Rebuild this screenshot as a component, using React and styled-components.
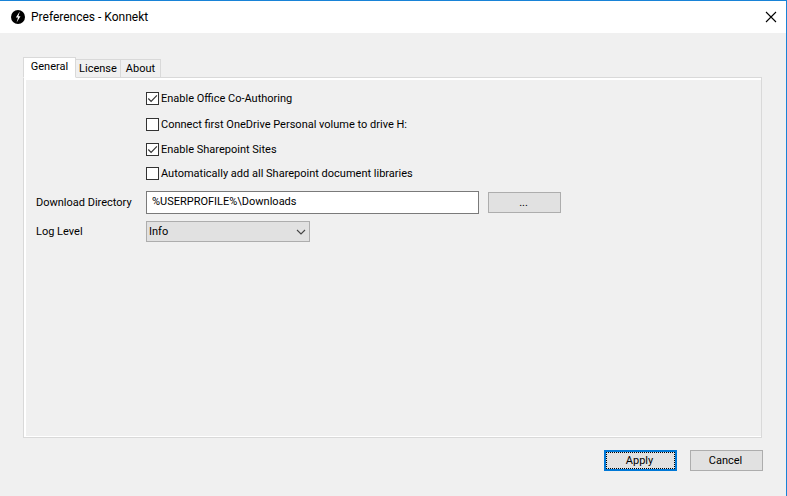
import React, { useState } from "react";
import styled, { createGlobalStyle } from "styled-components";

const GlobalStyle = createGlobalStyle`
  *, *::before, *::after { box-sizing: border-box; }
  body {
    margin: 0;
    background: #f0f0f0;
    color: #000;
    font: 11px/14px Roboto, sans-serif;
  }
  button, input, select { font: inherit; color: inherit; margin: 0; border-radius: 0; }
`;

const Window = styled.main`
  display: flex;
  flex-direction: column;
  min-height: 100vh;
  background: #f0f0f0;
  border-top: 1px solid #1883d7;
  border-right: 1px solid #1883d7;
`;

const TitleBar = styled.header`
  display: flex;
  align-items: center;
  gap: 6px;
  height: 32px;
  padding: 0 9px 0 11px;
  background: #fff;
`;

const Title = styled.h1`
  flex: 1;
  margin: 0;
  font: 12px/16px Roboto, sans-serif;
`;

const CloseButton = styled.button`
  display: flex;
  padding: 0;
  border: 0;
  background: none;
`;

const Content = styled.div`
  display: flex;
  flex: 1;
  flex-direction: column;
  padding: 24px 24px 0 23px;
`;

const TabList = styled.div`
  display: flex;
  align-items: flex-end;
  position: relative;
  margin-bottom: -1px;
`;

const Tab = styled.button`
  height: ${(p) => (p.$active ? 21 : 19)}px;
  padding: ${(p) => (p.$active ? "0 0 2px" : "1px 0 0")};
  border: 1px solid #d9d9d9;
  border-left-width: ${(p) => (p.$active ? 1 : 0)}px;
  border-bottom-color: ${(p) => (p.$active ? "#fff" : "#d9d9d9")};
  background: ${(p) => (p.$active ? "#fff" : "#f0f0f0")};
  width: ${(p) => p.$width}px;
`;

const Panel = styled.section`
  flex: 1;
  border: 1px solid #d9d9d9;
  background: #f0f0f0;
  box-shadow: inset 2px 2px #fff, inset 0 -1px #fff;
  padding: 8px 12px;
`;

const Form = styled.div`
  display: grid;
  grid-template-columns: 110px minmax(0, 1fr);
  grid-template-rows: 25px 27px 23px 25px 33px 25px;
  align-items: center;
`;

const CheckLabel = styled.label`
  display: flex;
  grid-column: 2;
  align-items: center;
  gap: 2px;
  white-space: nowrap;
`;

const CheckFrame = styled.span`
  display: grid;
  flex: none;
  width: 13px;
  height: 13px;

  > * { grid-area: 1 / 1; }
  svg { pointer-events: none; visibility: hidden; }
  input:checked + svg { visibility: visible; }
`;

const CheckInput = styled.input`
  appearance: none;
  width: 13px;
  height: 13px;
  border: 1px solid #333;
  background: #fff;
`;

const FieldLabel = styled.label`
  white-space: nowrap;
`;

const PathRow = styled.div`
  display: flex;
  align-items: center;
  gap: 9px;
`;

const PathInput = styled.input`
  flex: 0 1 333px;
  min-width: 0;
  height: 23px;
  padding: 0 5px 3px;
  border: 1px solid #7a7a7a;
  background: #fff;
  outline: 0;
`;

const SelectFrame = styled.div`
  display: grid;
  align-items: center;
  width: 164px;

  > * { grid-area: 1 / 1; }
  svg { justify-self: end; margin-right: 4px; pointer-events: none; }
`;

const Select = styled.select`
  appearance: none;
  width: 100%;
  height: 21px;
  padding: 0 2px;
  border: 1px solid #adadad;
  background: #e1e1e1;
`;

const Button = styled.button`
  flex: none;
  width: 73px;
  height: 21px;
  padding: 0 2px 0 0;
  border: ${(p) => (p.$default ? "2px solid #0078d7" : "1px solid #adadad")};
  background: #e1e1e1;
  outline: ${(p) => (p.$default ? "1px dotted #000" : "none")};
  outline-offset: -3px;
`;

const Footer = styled.footer`
  display: flex;
  justify-content: flex-end;
  gap: 13px;
  padding: 12px 23px 25px;
`;

function AppIcon() {
  return (
    <svg width="14" height="14" viewBox="0 0 14 14" aria-hidden="true">
      <circle cx="7" cy="7" r="7" fill="#000" />
      <path d="M8.8 1.6 4.8 7.4H7L5.6 12.4 9.5 6.2H7.4Z" fill="#fff" />
    </svg>
  );
}

function CheckOption({ label, defaultChecked }) {
  return (
    <CheckLabel>
      <CheckFrame>
        <CheckInput type="checkbox" defaultChecked={defaultChecked} />
        <svg width="13" height="13" viewBox="0 0 13 13" aria-hidden="true">
          <path d="M2.3 6.5 5.1 9.3 10.9 3.4" fill="none" stroke="#333" strokeWidth="1.2" />
        </svg>
      </CheckFrame>
      {label}
    </CheckLabel>
  );
}

const tabs = [
  { name: "General", width: 53 },
  { name: "License", width: 45 },
  { name: "About", width: 40 },
];

export default function App() {
  const [active, setActive] = useState("General");
  return (
    <>
      <GlobalStyle />
      <Window>
        <TitleBar>
          <AppIcon />
          <Title>Preferences - Konnekt</Title>
          <CloseButton type="button" aria-label="Close">
            <svg width="12" height="12" viewBox="0 0 12 12" aria-hidden="true">
              <path d="M1 1 11 11M11 1 1 11" stroke="#000" strokeWidth="1.1" />
            </svg>
          </CloseButton>
        </TitleBar>
        <Content>
          <TabList role="tablist">
            {tabs.map((tab) => (
              <Tab
                key={tab.name}
                type="button"
                role="tab"
                aria-selected={active === tab.name}
                $active={active === tab.name}
                $width={tab.width}
                onClick={() => setActive(tab.name)}
              >
                {tab.name}
              </Tab>
            ))}
          </TabList>
          <Panel role="tabpanel" aria-label={active}>
            {active === "General" && (
              <Form>
                <CheckOption label="Enable Office Co-Authoring" defaultChecked />
                <CheckOption label="Connect first OneDrive Personal volume to drive H:" />
                <CheckOption label="Enable Sharepoint Sites" defaultChecked />
                <CheckOption label="Automatically add all Sharepoint document libraries" />
                <FieldLabel htmlFor="download-dir">Download Directory</FieldLabel>
                <PathRow>
                  <PathInput id="download-dir" type="text" defaultValue="%USERPROFILE%\Downloads" />
                  <Button type="button" aria-label="Browse for directory">...</Button>
                </PathRow>
                <FieldLabel htmlFor="log-level">Log Level</FieldLabel>
                <SelectFrame>
                  <Select id="log-level" defaultValue="Info">
                    <option>Info</option>
                  </Select>
                  <svg width="10" height="6" viewBox="0 0 10 6" aria-hidden="true">
                    <path d="M1 1 5 5 9 1" fill="none" stroke="#444" strokeWidth="1.1" />
                  </svg>
                </SelectFrame>
              </Form>
            )}
          </Panel>
        </Content>
        <Footer>
          <Button type="button" $default>Apply</Button>
          <Button type="button">Cancel</Button>
        </Footer>
      </Window>
    </>
  );
}
